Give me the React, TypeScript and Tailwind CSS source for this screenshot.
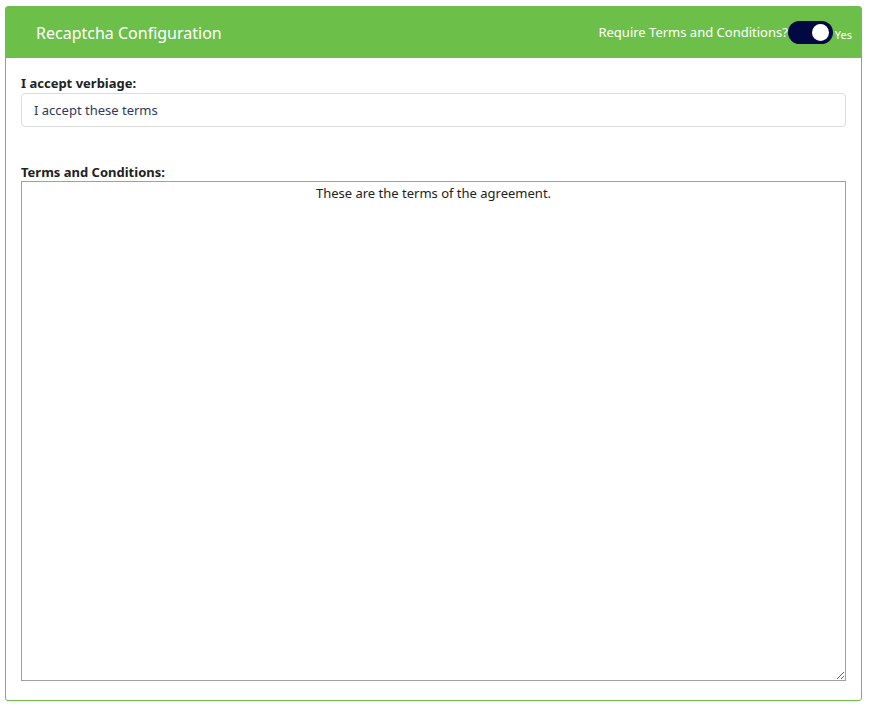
export default function App() {
  return (
    <div className="min-h-[708px] bg-white pt-[6px] pl-[5px] pr-[7px] font-['Open_Sans',sans-serif]">
      <div className="rounded-[3px] border border-[#6cc04a]">
        <div className="flex h-[51px] items-center justify-between bg-[#6cc04a] pl-[30px]">
          <span className="text-[16px] text-white">Recaptcha Configuration</span>
          <div className="flex items-center text-white">
            <span className="text-[13px]">Require Terms and Conditions?</span>
            <div className="flex h-[23px] w-[45px] items-center justify-end rounded-full bg-[#020842] pr-[4px]">
              <div className="h-[17px] w-[17px] rounded-full bg-white" />
            </div>
            <span className="ml-[2px] mr-[9px] mt-[6px] text-[11px]">Yes</span>
          </div>
        </div>
        <div className="px-[15px] pt-[16px] pb-[19px]">
          <label className="block text-[13px] font-bold leading-[18px] text-[#222]">I accept verbiage:</label>
          <input
            defaultValue="I accept these terms"
            className="mt-[1px] block h-[34px] w-full rounded-[4px] border border-[#dcdcdc] px-[12px] text-[13px] text-[#2d3a5c] outline-none"
          />
          <label className="mt-[36px] block text-[13px] font-bold leading-[18px] text-[#222]">Terms and Conditions:</label>
          <textarea
            defaultValue="These are the terms of the agreement."
            className="block h-[500px] w-[825px] border border-[#a0a0a0] px-[2px] pt-[2px] text-center text-[13px] text-[#222] outline-none"
          />
        </div>
      </div>
    </div>
  );
}
